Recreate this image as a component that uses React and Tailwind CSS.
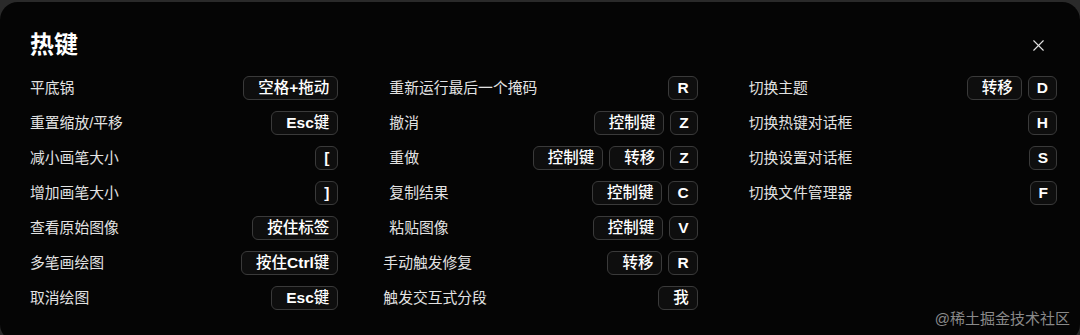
import { X } from 'lucide-react';

const columns = [
  [
    { label: '平底锅', keys: ['空格+拖动'] },
    { label: '重置缩放/平移', keys: ['Esc键'] },
    { label: '减小画笔大小', keys: ['['] },
    { label: '增加画笔大小', keys: [']'] },
    { label: '查看原始图像', keys: ['按住标签'] },
    { label: '多笔画绘图', keys: ['按住Ctrl键'] },
    { label: '取消绘图', keys: ['Esc键'] },
  ],
  [
    { label: '重新运行最后一个掩码', keys: ['R'] },
    { label: '撤消', keys: ['控制键', 'Z'] },
    { label: '重做', keys: ['控制键', '转移', 'Z'] },
    { label: '复制结果', keys: ['控制键', 'C'] },
    { label: '粘贴图像', keys: ['控制键', 'V'] },
    { label: '手动触发修复', keys: ['转移', 'R'], shift: true },
    { label: '触发交互式分段', keys: ['我'], shift: true },
  ],
  [
    { label: '切换主题', keys: ['转移', 'D'] },
    { label: '切换热键对话框', keys: ['H'] },
    { label: '切换设置对话框', keys: ['S'] },
    { label: '切换文件管理器', keys: ['F'] },
  ],
];

const Key = ({ k }) => {
  const single = /^[A-Za-z\[\]]$/.test(k);
  // latin parts bold, CJK parts medium
  const parts = k.split(/([A-Za-z\[\]+]+)/).filter(Boolean);
  return (
    <span
      className={`h-6 flex items-center rounded-[6px] border border-[#3a3a3a] bg-[#0e0e0e] text-[15.5px] font-medium text-white leading-none ${
        single ? 'px-2' : 'pl-[14px] pr-2'
      }`}
    >
      {parts.map((p, i) =>
        /[A-Za-z\[\]+]/.test(p) ? (
          <span key={i} className="font-bold">{p}</span>
        ) : (
          <span key={i}>{p}</span>
        )
      )}
    </span>
  );
};

export default function App() {
  return (
    <div
      className="w-[1080px] h-[335px] bg-[#2a2a2a] pt-[2px] relative overflow-hidden"
      style={{ fontFamily: '"Liberation Sans", "Noto Sans CJK SC", sans-serif' }}
    >
      <div className="h-[340px] rounded-[18px] bg-[#050505] pl-[30px] pr-[23px] pt-[27px]">
        <div className="flex items-center justify-between h-8">
          <h1 className="text-[24px] font-bold text-white leading-none">热键</h1>
          <button className="text-[#e0e0e0] mr-[9px]">
            <X size={19} strokeWidth={1.4} />
          </button>
        </div>

        <div className="grid grid-cols-3 gap-x-[51px] mt-[15px]">
          {columns.map((col, i) => (
            <div key={i} className="flex flex-col gap-[11px]">
              {col.map((row) => (
                <div key={row.label} className="h-6 flex items-center justify-between">
                  <span className={`text-[14.8px] text-[#e2e2e2] ${row.shift ? '-ml-[6px]' : ''}`}>
                    {row.label}
                  </span>
                  <div className="flex items-center gap-[6px]">
                    {row.keys.map((k, j) => (
                      <Key key={j} k={k} />
                    ))}
                  </div>
                </div>
              ))}
            </div>
          ))}
        </div>
      </div>

      <span className="absolute right-[10px] bottom-[5px] text-[15px] text-[#8a8a8a]">
        @稀土掘金技术社区
      </span>
    </div>
  );
}
